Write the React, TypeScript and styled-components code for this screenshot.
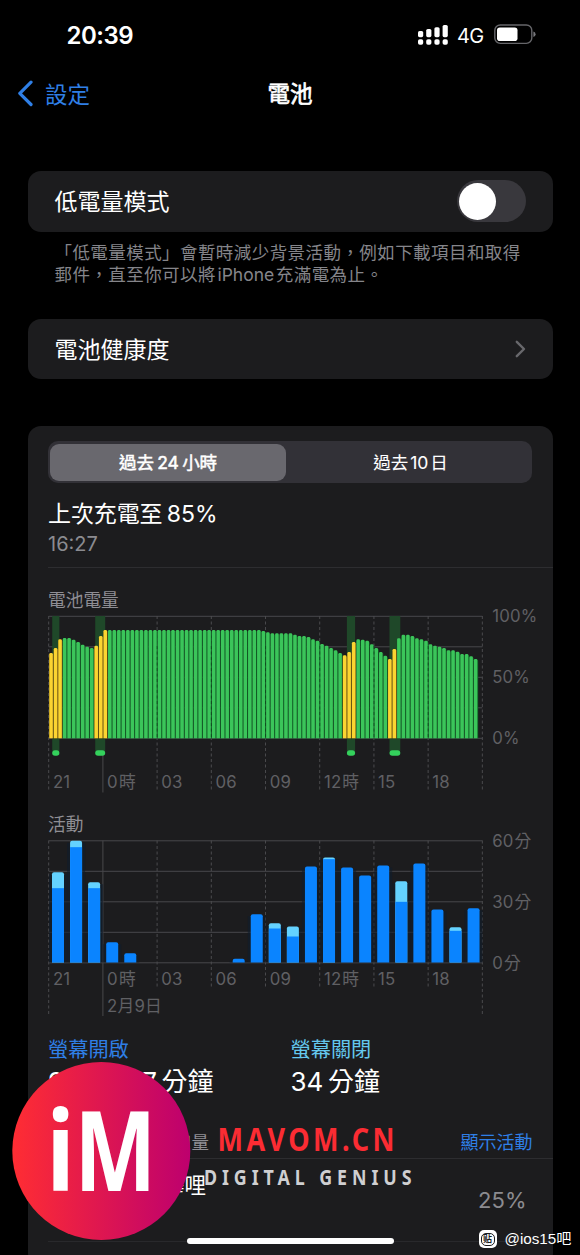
import React from "react";
import styled, { createGlobalStyle } from "styled-components";

const GlobalStyle = createGlobalStyle`
  *, *::before, *::after { box-sizing: border-box; }
  body { margin: 0; background: #000; }
`;

const FONT = `Inter, "Noto Sans CJK TC", sans-serif`;
const CARD = "#1c1c1e";
const BLUE = "#2f7fe6";
const CYAN = "#64c8ee";

const Screen = styled.main`
  position: relative;
  display: flex;
  flex-direction: column;
  width: 580px;
  height: 1255px;
  overflow: hidden;
  background: #000;
  color: #fff;
  font-family: ${FONT};
  white-space: nowrap;
`;

const StatusBar = styled.header`
  display: flex;
  flex: none;
  justify-content: space-between;
  align-items: center;
  height: 70px;
  padding: 0 44px 0 66.5px;
`;

const Clock = styled.time`
  font-size: 24px;
  font-weight: 600;
  letter-spacing: -0.5px;
`;

const StatusIcons = styled.div`
  display: flex;
  align-items: center;
  gap: 9px;
`;

const Network = styled.span`
  font-size: 20px;
  letter-spacing: -0.6px;
  line-height: 24px;
  padding-top: 1px;
  width: 28px;
`;

const NavBar = styled.nav`
  display: grid;
  flex: none;
  grid-template-columns: 1fr auto 1fr;
  align-items: center;
  height: 46px;
  padding: 0 18px;
  margin-bottom: 55px;
`;

const BackLink = styled.a`
  display: flex;
  align-items: center;
  gap: 11px;
  color: ${BLUE};
  font-size: 22.5px;
`;

const NavTitle = styled.h1`
  margin: 0;
  padding-bottom: 2px;
  font-size: 22.5px;
  font-weight: 400;
  -webkit-text-stroke: 0.7px #fff;
`;

const Content = styled.div`
  display: flex;
  flex: none;
  flex-direction: column;
  padding: 0 27.5px;
`;

const Row = styled.section<{ $height: number }>`
  display: flex;
  align-items: center;
  justify-content: space-between;
  height: ${(p) => p.$height}px;
  padding: 0 27px;
  border-radius: 13px;
  background: ${CARD};
  font-size: 23px;
`;

const RowLabel = styled.span`
  padding-bottom: 2px;
`;

const Switch = styled.span`
  width: 69px;
  height: 42px;
  padding: 2.5px;
  border-radius: 21px;
  background: #39383d;
`;

const Knob = styled.span`
  display: block;
  width: 37px;
  height: 37px;
  border-radius: 50%;
  background: #fff;
`;

const Footnote = styled.p`
  margin: 10px 0 33.5px;
  padding-left: 27px;
  height: 44px;
  color: #85858a;
  font-size: 17.5px;
  line-height: 22px;
  letter-spacing: 0.43px;
  word-spacing: -3.8px;
`;

const Latin = styled.span`
  letter-spacing: 0;
`;

const UsageCard = styled.section`
  display: flex;
  flex-direction: column;
  height: 840px;
  margin-top: 47.5px;
  padding: 15px 0 0 20.5px;
  border-radius: 13px;
  background: ${CARD};
`;

const Segments = styled.div`
  display: flex;
  width: 484px;
  height: 42px;
  padding: 2.5px 2px;
  border-radius: 10px;
  background: #323137;
`;

const Segment = styled.button<{ $active?: boolean }>`
  flex: ${(p) => (p.$active ? "0 0 236px" : "1")};
  padding: 0 0 2px ${(p) => (p.$active ? 0 : "5px")};
  border: 0;
  border-radius: 9px;
  background: ${(p) => (p.$active ? "#69686e" : "transparent")};
  color: #fff;
  font-family: inherit;
  font-size: 17.5px;
  letter-spacing: -0.1px;
  word-spacing: ${(p) => (p.$active ? "-1.4px" : "-2.7px")};
  -webkit-text-stroke: ${(p) => (p.$active ? "0.5px" : "0.1px")} #fff;
`;

const LastCharge = styled.div`
  display: flex;
  flex-direction: column;
  height: 85px;
  padding-top: 14px;
  border-bottom: 1px solid #2d2d30;
`;

const ChargeTitle = styled.h2`
  margin: 0;
  font-size: 23px;
  font-weight: 400;
  line-height: 34px;
  word-spacing: -2px;
  letter-spacing: -0.1px;
`;

const ChargeTime = styled.span`
  color: #8b8b90;
  font-size: 20px;
  line-height: 26px;
`;

const ChartTitle = styled.h3<{ $top: number }>`
  margin: ${(p) => p.$top}px 0 4px;
  height: 24px;
  color: #8f8e94;
  font-size: 17.7px;
  font-weight: 400;
  line-height: 25px;
`;

const Chart = styled.svg`
  display: block;
  flex: none;
  overflow: visible;
  font-family: ${FONT};
`;

const AxisLabel = styled.text`
  fill: #606064;
  font-size: 16.8px;
  letter-spacing: 0.15px;
  word-spacing: -3.8px;
`;

const Totals = styled.div`
  display: grid;
  grid-template-columns: 242.5px 1fr;
  margin-top: 17.5px;
`;

const Total = styled.div<{ $color: string }>`
  display: flex;
  flex-direction: column;
  font-size: 26px;
  line-height: 34px;
  word-spacing: -2.7px;

  span {
    color: ${(p) => p.$color};
    font-size: 20.2px;
    line-height: 30px;
  }
`;

const ListHeader = styled.div`
  display: flex;
  justify-content: space-between;
  align-items: center;
  height: 60px;
  padding: 26px 20px 0 35px;
  border-bottom: 1px solid #2d2d30;
  color: #8f8e94;
  font-size: 17.5px;

  a {
    color: ${BLUE};
    font-size: 18px;
  }
`;

const AppRow = styled.div`
  display: flex;
  justify-content: space-between;
  height: 83px;
  padding: 11px 26px 0 72px;
  border-bottom: 1px solid #29292c;
  font-size: 21.5px;
  line-height: 30px;

  span {
    padding-top: 15px;
    color: #8b8b90;
    font-size: 22px;
  }
`;

const Watermark = styled.svg`
  position: absolute;
  left: 12px;
  top: 1062px;
  overflow: visible;
`;

const HomeIndicator = styled.div`
  position: absolute;
  left: 187px;
  top: 1237.5px;
  width: 207px;
  height: 6.5px;
  border-radius: 4px;
  background: #fff;
`;

const Source = styled.div`
  position: absolute;
  left: 478.5px;
  top: 1228px;
  display: flex;
  align-items: center;
  gap: 8px;
  height: 22px;
  font-family: "Liberation Sans", "Noto Sans CJK SC", sans-serif;
  font-size: 15.2px;
  line-height: 18px;
`;

const SourceBadge = styled.span`
  display: grid;
  place-items: center;
  width: 18px;
  height: 18px;
  border-radius: 5px;
  background: #fff;

  b {
    display: grid;
    place-items: center;
    width: 14px;
    height: 13px;
    border: 1.3px solid #1c1c1e;
    border-radius: 5px;
    color: #1c1c1e;
    font-size: 9px;
    line-height: 9px;
  }
`;

const SLOT = 4.517;
const HOUR = SLOT * 4;
const PLOT_W = HOUR * 24;
const PLOT_H = 122;

/* Charge level drop from the top of the plot, one per quarter hour, in thirds of a pixel. */
const LEVELS: number[] = [
  111, 96, 70, 66, 66, 71, 78, 86, 92, 96, 89, 60, 42,
  ...Array(34).fill(42),
  45, 49, 52, 52, 52, 52, 52, 56, 60, 60, 63, 70, 74, 84, 89, 96, 103, 111,
  118, 108, 78, 70, 71, 74, 85, 96, 108, 119, 129, 99, 67, 56, 56, 60, 67, 70,
  74, 85, 89, 92, 96, 103, 103, 107, 114, 114, 121, 129,
];
const CHARGING = new Set([0, 1, 2, 10, 11, 12, 65, 66, 67, 75, 76]);
const BANDS = [
  [3.5, 7.2],
  [46.5, 10],
  [298.2, 8.2],
  [340.8, 10.8],
];

const ACTIVITY: Record<number, [number, number?]> = {
  0: [201, 249], 1: [107, 126], 2: [231, 249], 3: [411], 4: [444], 10: [461],
  11: [327], 12: [354, 370], 13: [364, 394], 14: [184], 15: [157, 162],
  16: [187], 17: [211], 18: [181], 19: [228, 290], 20: [175], 21: [313],
  22: [366, 377], 23: [309],
};

const HOURS = ["21", "0 時", "03", "06", "09", "12 時", "15", "18", ""];

function Grid({ depth, edgeDepth, labelY }: { depth: number; edgeDepth: number; labelY: number }) {
  return (
    <g>
      {[0, 1, 2, 3, 4].map((i) => (
        <line key={i} x1={0} x2={PLOT_W} y1={(PLOT_H * i) / 4 + 0.3} y2={(PLOT_H * i) / 4 + 0.3} stroke="#48484b" />
      ))}
      {HOURS.map((label, i) => {
        const x = i * HOUR * 3;
        const edge = i === 0 || i === 8;
        return (
          <g key={i}>
            <line
              x1={x} x2={x} y1={0}
              y2={i === 1 ? edgeDepth + 1.5 : edge ? edgeDepth : depth}
              stroke={i === 1 ? "#48484b" : "#4b4b4e"}
              strokeDasharray={i === 1 ? undefined : "3 2.5"}
            />
            <AxisLabel x={x + 4.2} y={labelY}>{label}</AxisLabel>
          </g>
        );
      })}
    </g>
  );
}

function BatteryChart() {
  return (
    <Chart width={500} height={180} viewBox="-0.7 0 500 180">
      <Grid depth={175} edgeDepth={175} labelY={171.7} />
      {BANDS.map(([x, w]) => (
        <rect key={x} x={x} y={0} width={w} height={135} fill="#1f4829" />
      ))}
      {LEVELS.map((d, i) => {
        const y = d / 3;
        const hot = CHARGING.has(i);
        return (
          <g key={i}>
            <rect x={i * SLOT + 0.4} y={y + 1.5} width={SLOT} height={PLOT_H - y - 1.2} fill={hot ? "#6d5312" : "#125c26"} />
            <path
              d={`M${i * SLOT + 0.6} ${PLOT_H + 0.3}V${y + 1.2}q0-1.2 1.2-1.2h1.1q1.2 0 1.2 1.2V${PLOT_H + 0.3}z`}
              fill={hot ? "#fbd431" : "#3bc55a"}
            />
          </g>
        );
      })}
      {HOURS.map((_, i) =>
        i > 1 && i < 8 ? (
          <line key={i} x1={i * HOUR * 3} x2={i * HOUR * 3} y1={30} y2={PLOT_H} stroke="#0c3c19" strokeOpacity={0.55} strokeDasharray="3 2.5" />
        ) : null,
      )}
      {BANDS.map(([x, w]) => (
        <rect key={x} x={x} y={134.2} width={w} height={5.6} rx={2.8} fill="#34d15c" />
      ))}
      <AxisLabel x={443.5} y={6}>100%</AxisLabel>
      <AxisLabel x={443.5} y={67}>50%</AxisLabel>
      <AxisLabel x={443.5} y={128}>0%</AxisLabel>
    </Chart>
  );
}

function ActivityChart() {
  return (
    <Chart width={500} height={177} viewBox="-0.7 -0.5 500 177">
      <Grid depth={147} edgeDepth={174} labelY={144.7} />
      {Object.entries(ACTIVITY).map(([hour, [top, split]]) => {
        const x = Number(hour) * HOUR + 3.3;
        const y = (top - 106) / 3;
        const s = split === undefined ? y : (split - 106) / 3;
        const shape = `M${x} ${PLOT_H}V${y + 2}q0-2 2-2h8q2 0 2 2V${PLOT_H}z`;
        return (
          <g key={hour}>
            <rect x={x - 3} y={y + 2} width={18} height={PLOT_H - y - 2} fill="#0f1c2c" fillOpacity={0.6} />
            <path d={shape} fill={split === undefined ? "#0a84ff" : "#64d2ff"} />
            {split !== undefined && <rect x={x} y={s} width={12} height={PLOT_H - s} fill="#0a84ff" />}
          </g>
        );
      })}
      <AxisLabel x={443.5} y={6}>60 分</AxisLabel>
      <AxisLabel x={443.5} y={67}>30 分</AxisLabel>
      <AxisLabel x={443.5} y={128}>0 分</AxisLabel>
      <AxisLabel x={HOUR * 3 + 4.2} y={171.5}>2月9日</AxisLabel>
    </Chart>
  );
}

export default function App() {
  return (
    <>
      <GlobalStyle />
      <Screen>
        <StatusBar>
          <Clock>20:39</Clock>
          <StatusIcons>
            <svg width="30" height="22" viewBox="0 0 30 22" fill="#fff">
              {[7, 5, 3.2, 1].map((y, i) => (
                <g key={y}>
                  <rect x={i * 8.2} y={y} width={5.2} height={13.2 - y} rx={1.6} />
                  <rect x={i * 8.2} y={15.3} width={5.2} height={5.4} rx={1.8} />
                </g>
              ))}
            </svg>
            <Network>4G</Network>
            <svg width="42" height="22" viewBox="0 0 42 22">
              <rect x="0.8" y="1" width="37" height="18.4" rx="5.5" fill="none" stroke="#66666a" strokeWidth="1.4" />
              <rect x="3" y="3.4" width="20.5" height="13.6" rx="2.8" fill="#fff" />
              <path d="M39.4 7.4q2.2.8 2.2 2.8t-2.2 2.8z" fill="#77777b" />
            </svg>
          </StatusIcons>
        </StatusBar>

        <NavBar>
          <BackLink>
            <svg width="16" height="27" viewBox="0 0 16 27" fill="none" stroke={BLUE} strokeWidth="3.2" strokeLinecap="round" strokeLinejoin="round">
              <path d="M13 2.2 1.8 13.3 13 24.5" />
            </svg>
            設定
          </BackLink>
          <NavTitle>電池</NavTitle>
        </NavBar>

        <Content>
          <Row $height={60.5}>
            <RowLabel>低電量模式</RowLabel>
            <Switch><Knob /></Switch>
          </Row>
          <Footnote>
            「低電量模式」會暫時減少背景活動，例如下載項目和取得
            <br />
            郵件，直至你可以將 <Latin>iPhone</Latin> 充滿電為止。
          </Footnote>
          <Row $height={59.5}>
            <RowLabel>電池健康度</RowLabel>
            <svg width="11" height="18" viewBox="0 0 11 18" fill="none" stroke="#68686c" strokeWidth="2.4" strokeLinecap="round" strokeLinejoin="round">
              <path d="M1.8 1.8 9 9l-7.2 7.2" />
            </svg>
          </Row>

          <UsageCard>
            <Segments>
              <Segment $active>過去 24 小時</Segment>
              <Segment>過去 10 日</Segment>
            </Segments>
            <LastCharge>
              <ChargeTitle>上次充電至 85%</ChargeTitle>
              <ChargeTime>16:27</ChargeTime>
            </LastCharge>

            <ChartTitle $top={20}>電池電量</ChartTitle>
            <BatteryChart />
            <ChartTitle $top={16}>活動</ChartTitle>
            <ActivityChart />

            <Totals>
              <Total $color={BLUE}>
                <span>螢幕開啟</span>9 小時 47 分鐘
              </Total>
              <Total $color={CYAN}>
                <span>螢幕關閉</span>34 分鐘
              </Total>
            </Totals>

            <ListHeader>
              App 的電池用量
              <a>顯示活動</a>
            </ListHeader>
            <AppRow>
              嗶哩嗶哩
              <span>25%</span>
            </AppRow>
          </UsageCard>
        </Content>

        <HomeIndicator />

        <Watermark width="410" height="180" viewBox="12 1062 410 180">
          <defs>
            <linearGradient id="disc">
              <stop offset="0" stopColor="#ff2d33" />
              <stop offset="1" stopColor="#bd006e" />
            </linearGradient>
          </defs>
          <circle cx="101.3" cy="1151" r="89" fill="url(#disc)" />
          <g fill="#fff" fontFamily="Open Sans, sans-serif">
            <text fontSize="111" fontWeight="700" transform="translate(46 1190.5) scale(0.86 1)">i</text>
            <text fontSize="111" fontWeight="700" transform="translate(74.5 1190.5) scale(0.78 1)">M</text>
          </g>
          <g fontFamily="Noto Sans, sans-serif">
            <text fontSize="33" fontWeight="700" fill="#fb2c33" letterSpacing="4.2" transform="translate(217.5 1151) scale(0.82 1)">
              MAVOM.CN
            </text>
            <text fontSize="21" fontWeight="700" fill="#cfcfd1" letterSpacing="5.8" transform="translate(204 1185) scale(0.85 1)">
              DIGITAL GENIUS
            </text>
          </g>
        </Watermark>

        <Source>
          <SourceBadge><b>贴</b></SourceBadge>
          @ios15吧
        </Source>
      </Screen>
    </>
  );
}
